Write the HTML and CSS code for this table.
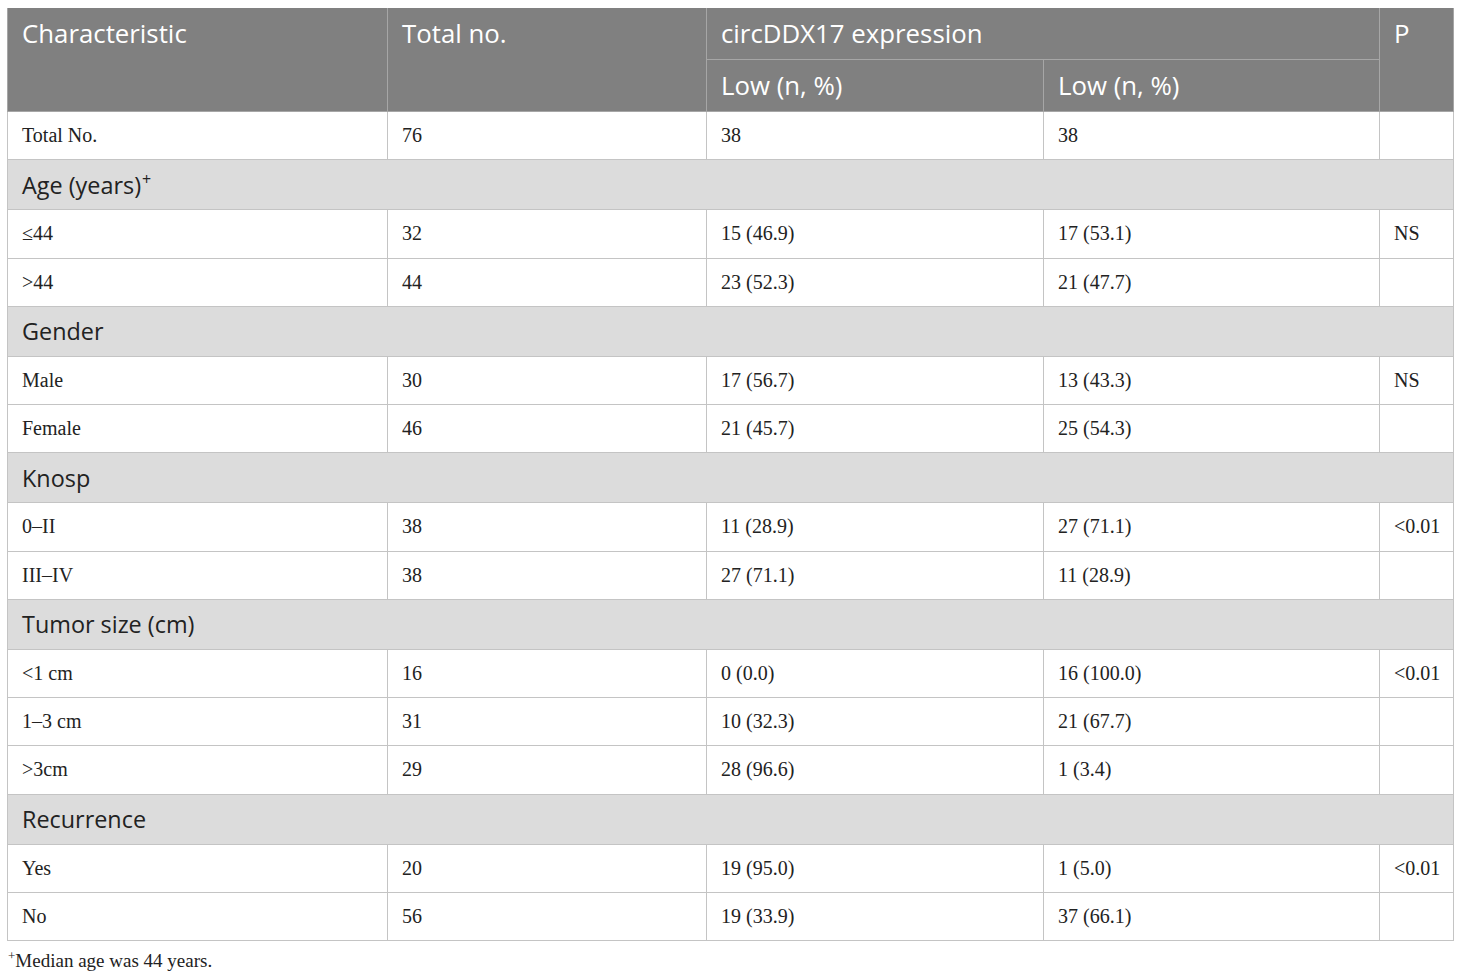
FILE: index.html
```html
<!DOCTYPE html>
<html>
<head>
<meta charset="utf-8">
<link rel="stylesheet" href="styles.css">
</head>
<body>
<div class="wrap">
<table class="tbl">
  <colgroup>
    <col class="c1"><col class="c2"><col class="c3"><col class="c4"><col class="c5">
  </colgroup>
  <thead>
    <tr class="h1">
      <th rowspan="2">Characteristic</th>
      <th rowspan="2">Total no.</th>
      <th colspan="2" class="span">circDDX17 expression</th>
      <th rowspan="2">P</th>
    </tr>
    <tr class="h2">
      <th>Low (n, %)</th>
      <th>Low (n, %)</th>
    </tr>
  </thead>
  <tbody>
    <tr class="d"><td>Total No.</td><td>76</td><td>38</td><td>38</td><td></td></tr>
    <tr class="g"><td colspan="5">Age (years)<sup>+</sup></td></tr>
    <tr class="d"><td>≤44</td><td>32</td><td>15 (46.9)</td><td>17 (53.1)</td><td>NS</td></tr>
    <tr class="d"><td>&gt;44</td><td>44</td><td>23 (52.3)</td><td>21 (47.7)</td><td></td></tr>
    <tr class="g"><td colspan="5">Gender</td></tr>
    <tr class="d"><td>Male</td><td>30</td><td>17 (56.7)</td><td>13 (43.3)</td><td>NS</td></tr>
    <tr class="d"><td>Female</td><td>46</td><td>21 (45.7)</td><td>25 (54.3)</td><td></td></tr>
    <tr class="g"><td colspan="5">Knosp</td></tr>
    <tr class="d"><td>0–II</td><td>38</td><td>11 (28.9)</td><td>27 (71.1)</td><td>&lt;0.01</td></tr>
    <tr class="d"><td>III–IV</td><td>38</td><td>27 (71.1)</td><td>11 (28.9)</td><td></td></tr>
    <tr class="g"><td colspan="5">Tumor size (cm)</td></tr>
    <tr class="d"><td>&lt;1 cm</td><td>16</td><td>0 (0.0)</td><td>16 (100.0)</td><td>&lt;0.01</td></tr>
    <tr class="d"><td>1–3 cm</td><td>31</td><td>10 (32.3)</td><td>21 (67.7)</td><td></td></tr>
    <tr class="d"><td>&gt;3cm</td><td>29</td><td>28 (96.6)</td><td>1 (3.4)</td><td></td></tr>
    <tr class="g"><td colspan="5">Recurrence</td></tr>
    <tr class="d"><td>Yes</td><td>20</td><td>19 (95.0)</td><td>1 (5.0)</td><td>&lt;0.01</td></tr>
    <tr class="d"><td>No</td><td>56</td><td>19 (33.9)</td><td>37 (66.1)</td><td></td></tr>
  </tbody>
</table>
<p class="note"><sup>+</sup>Median age was 44 years.</p>
</div>
</body>
</html>
```
FILE: styles.css
```css
html, body {
  margin: 0;
  padding: 0;
  background: #fff;
}
.wrap {
  padding: 8px 0 0 7px;
}
.tbl {
  border-collapse: collapse;
  table-layout: fixed;
  width: 1446px;
  color: #222;
}
.c1 { width: 380px; }
.c2 { width: 319px; }
.c3 { width: 337px; }
.c4 { width: 336px; }
.c5 { width: 74px; }
.tbl th {
  background: #808080;
  color: #fff;
  font-family: "Open Sans", sans-serif;
  font-weight: 400;
  font-size: 25.8px;
  text-align: left;
  vertical-align: top;
  padding: 0 14px;
  height: 51px;
  line-height: 51px;
  border: 1px solid #a6a6a6;
  border-top: none;
}
.tbl td {
  border: 1px solid #c4c4c4;
  padding: 0 14px;
  text-align: left;
  vertical-align: middle;
}
.tbl tr.d td {
  font-family: "Liberation Serif", serif;
  font-size: 20px;
  height: 47.25px;
  background: #fff;
}
.tbl tr.g td {
  font-family: "Open Sans", sans-serif;
  font-size: 23.4px;
  height: 49px;
  background: #dcdcdc;
}
.tbl tr.g sup {
  font-size: 16px;
  vertical-align: 9px;
  line-height: 0;
  margin-left: 1px;
}
.note {
  margin: 9px 0 0 1px;
  font-family: "Liberation Serif", serif;
  font-size: 19px;
  color: #222;
}
.note sup {
  font-size: 13px;
  vertical-align: 7px;
  line-height: 0;
}
```
